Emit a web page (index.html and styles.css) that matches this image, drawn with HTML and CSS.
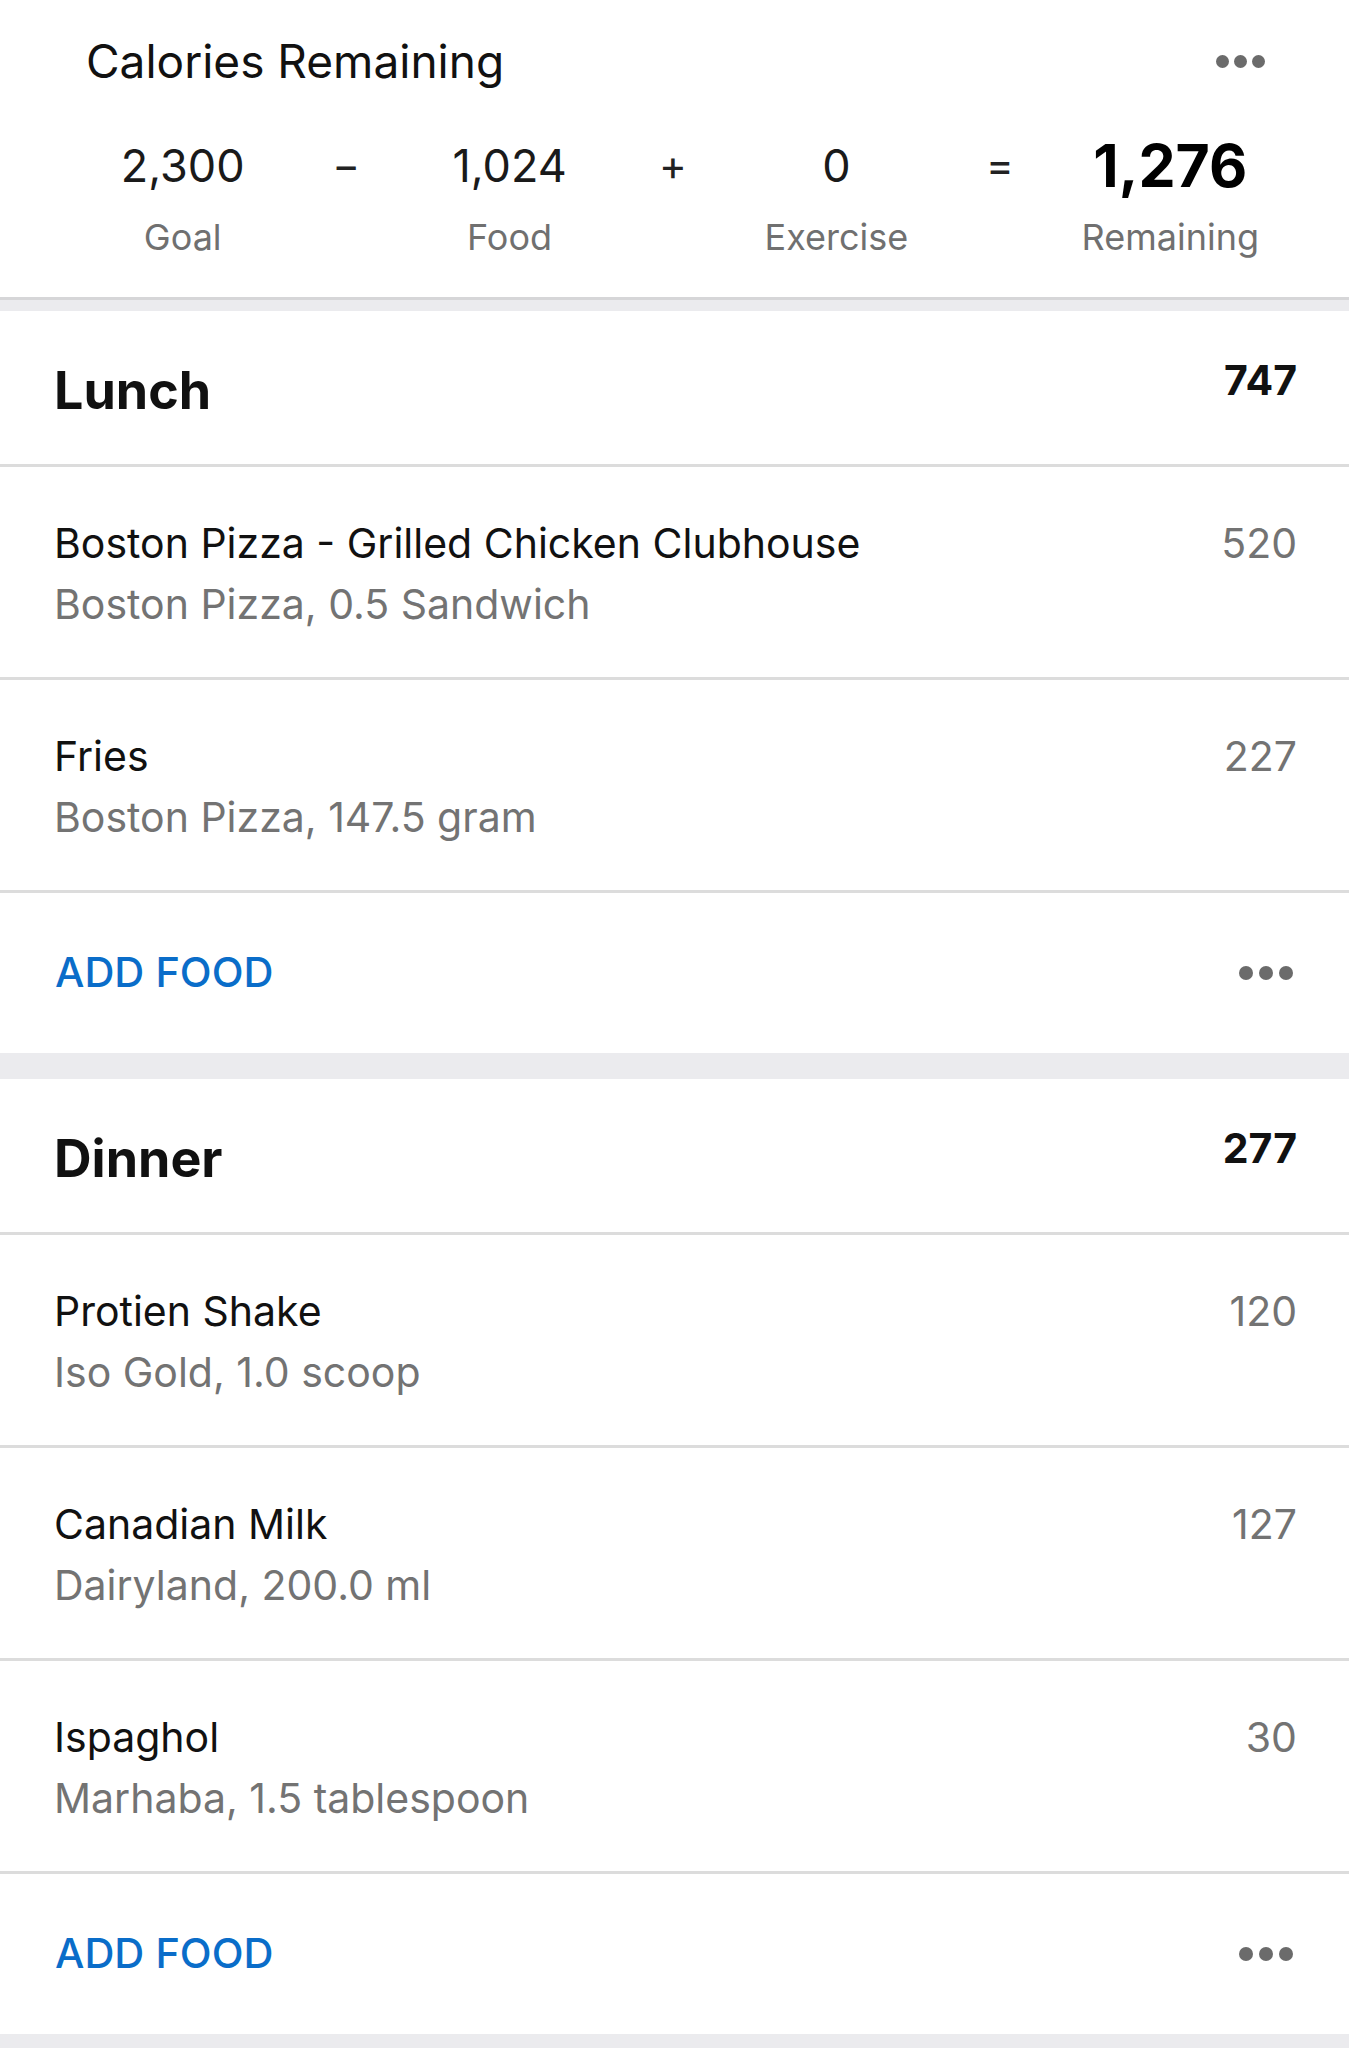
FILE: index.html
```html
<!DOCTYPE html>
<html lang="en">
<head>
    <meta charset="UTF-8">
    <meta name="viewport" content="width=device-width, initial-scale=1.0">
    <title>Diary</title>
    <link rel="stylesheet" href="styles.css">
</head>
<body>
    <div class="summary">
        <div class="summary-head">
            <span class="summary-title">Calories Remaining</span>
            <span class="dots small"><i></i><i></i><i></i></span>
        </div>

        <div class="totals">
            <span class="num">2,300</span>
            <span class="op">&minus;</span>
            <span class="num">1,024</span>
            <span class="op">+</span>
            <span class="num">0</span>
            <span class="op">=</span>
            <span class="num big">1,276</span>

            <span class="lbl">Goal</span>
            <span></span>
            <span class="lbl">Food</span>
            <span></span>
            <span class="lbl">Exercise</span>
            <span></span>
            <span class="lbl">Remaining</span>
        </div>
    </div>

    <!-- Lunch -->
    <div class="meal">
        <div class="meal-head">
            <span class="meal-name">Lunch</span>
            <span class="meal-total">747</span>
        </div>
        <div class="food">
            <div>
                <div class="food-name">Boston Pizza - Grilled Chicken Clubhouse</div>
                <div class="food-desc">Boston Pizza, 0.5 Sandwich</div>
            </div>
            <div class="food-cal">520</div>
        </div>
        <div class="food">
            <div>
                <div class="food-name">Fries</div>
                <div class="food-desc">Boston Pizza, 147.5 gram</div>
            </div>
            <div class="food-cal">227</div>
        </div>
        <div class="add-row">
            <span class="add-food">ADD FOOD</span>
            <span class="dots"><i></i><i></i><i></i></span>
        </div>
    </div>

    <!-- Dinner -->
    <div class="meal">
        <div class="meal-head">
            <span class="meal-name">Dinner</span>
            <span class="meal-total">277</span>
        </div>
        <div class="food">
            <div>
                <div class="food-name">Protien Shake</div>
                <div class="food-desc">Iso Gold, 1.0 scoop</div>
            </div>
            <div class="food-cal">120</div>
        </div>
        <div class="food">
            <div>
                <div class="food-name">Canadian Milk</div>
                <div class="food-desc">Dairyland, 200.0 ml</div>
            </div>
            <div class="food-cal">127</div>
        </div>
        <div class="food">
            <div>
                <div class="food-name">Ispaghol</div>
                <div class="food-desc">Marhaba, 1.5 tablespoon</div>
            </div>
            <div class="food-cal">30</div>
        </div>
        <div class="add-row">
            <span class="add-food">ADD FOOD</span>
            <span class="dots"><i></i><i></i><i></i></span>
        </div>
    </div>
</body>
</html>
```

FILE: styles.css
```css
body {
    margin: 0;
    background-color: #ebebee;
    font-family: Inter, "Liberation Sans", sans-serif;
    color: #111;
}

.summary {
    background-color: #fff;
    padding: 38px 84px 42px 86px;
    border-bottom: 3px solid #d6d6d8;
    margin-bottom: 11px;
}

.summary-head {
    display: flex;
    justify-content: space-between;
    align-items: center;
}

.summary-title {
    font-size: 46px;
    line-height: 1;
}

.totals {
    display: grid;
    grid-template-columns: repeat(7, 1fr);
    grid-template-rows: 60px auto;
    row-gap: 24px;
    align-items: center;
    text-align: center;
    margin: 51px 6px 0 15px;
}

.num {
    font-size: 45px;
    line-height: 1;
    color: #1a1a1a;
}

.num.big {
    font-size: 59px;
    font-weight: 700;
    color: #000;
}

.op {
    font-size: 42px;
    line-height: 1;
    color: #222;
}

.lbl {
    font-size: 36px;
    line-height: 1;
    color: #707070;
}

.dots {
    display: flex;
    gap: 6px;
}

.dots i {
    width: 14px;
    height: 14px;
    border-radius: 50%;
    background-color: #6b6b6b;
}

.dots.small {
    gap: 5px;
}

.dots.small i {
    width: 13px;
    height: 13px;
}

.meal {
    background-color: #fff;
    margin-bottom: 26px;
}

.meal-head {
    height: 156px;
    box-sizing: border-box;
    display: flex;
    justify-content: space-between;
    align-items: flex-start;
    padding: 49px 52px 0 54px;
    border-bottom: 3px solid #dcdcdc;
}

.meal-name {
    font-size: 52px;
    font-weight: 700;
    line-height: 1;
    margin-top: 5px;
}

.meal-total {
    font-size: 41px;
    font-weight: 700;
    line-height: 1;
}

.food {
    display: flex;
    justify-content: space-between;
    align-items: flex-start;
    padding: 56px 52px 52px 54px;
    border-bottom: 3px solid #dcdcdc;
}

.food-name {
    font-size: 41px;
    line-height: 1;
    color: #111;
}

.food-desc {
    font-size: 41px;
    line-height: 1;
    margin-top: 20px;
    color: #737373;
}

.food-cal {
    font-size: 41px;
    line-height: 1;
    color: #737373;
}

.add-row {
    height: 160px;
    display: flex;
    justify-content: space-between;
    align-items: center;
    padding: 0 56px 0 55px;
}

.add-food {
    font-size: 41.5px;
    font-weight: 500;
    line-height: 1;
    color: #0a6dc9;
}
```
